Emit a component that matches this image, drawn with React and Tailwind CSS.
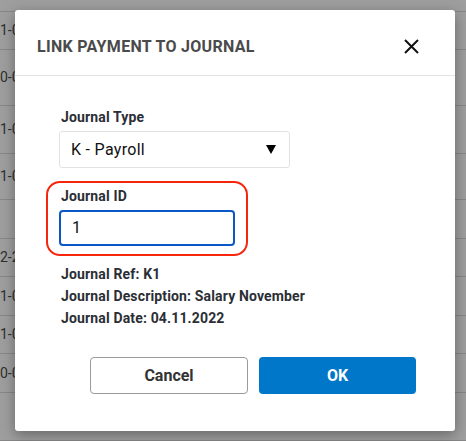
import React from 'react';

const rows = [
  { h: 'h-[12px]', text: '' },
  { h: 'h-[38px]', text: '1-01-2022' },
  { h: 'h-[56px]', text: '0-02-2022' },
  { h: 'h-[48px]', text: '1-03-2022' },
  { h: 'h-[46px]', text: '1-04-2022' },
  { h: 'h-[39px]', text: '' },
  { h: 'h-[38px]', text: '2-22-2022' },
  { h: 'h-[39px]', text: '1-05-2022' },
  { h: 'h-[38px]', text: '1-06-2022' },
  { h: 'h-[39px]', text: '0-07-2022' },
  { h: 'h-[48px]', text: '' },
];

const Field = ({ label, children }) => (
  <div className="flex flex-col">
    <label className="pl-[2px] text-[14px] leading-[20px] font-bold text-[#2b2e35] tracking-[0.15px]">{label}</label>
    <div className="mt-1">{children}</div>
  </div>
);

const LinkPaymentModal = () => {
  return (
    <div className="w-[440px] h-[421px] bg-white rounded-[3px] shadow-[0_4px_14px_rgba(0,0,0,0.35)] flex flex-col">
      <div className="flex items-start justify-between pl-[22px] pr-[36px] pt-[25px] h-[66px] border-b border-[#e3e3e3]">
        <h2 className="text-[16px] leading-[24px] font-bold text-[#4a4a4a] tracking-[0.3px]">LINK PAYMENT TO JOURNAL</h2>
        <button className="mt-[4px] w-[15px] h-[15px] flex items-center justify-center" aria-label="Close">
          <svg width="15" height="15" viewBox="0 0 15 15">
            <path d="M1 1 L14 14 M14 1 L1 14" stroke="#111" strokeWidth="2" />
          </svg>
        </button>
      </div>

      <div className="pl-[44px] pt-[31px] flex flex-col">
        <Field label="Journal Type">
          <div className="w-[231px] h-[37px] border border-[#e2e2e2] rounded-[3px] flex items-center justify-between pl-[11px] pr-[13px]">
            <span className="text-[16px] text-[#111] tracking-[0.3px]">K - Payroll</span>
            <svg width="10" height="9" viewBox="0 0 10 9">
              <path d="M0 0 H10 L5 9 Z" fill="#000" />
            </svg>
          </div>
        </Field>

        <div className="mt-[13px] -ml-[13px] w-[202px] border-2 border-[#f5260b] rounded-[14px] pl-[11px] pt-[3px] pb-[8px]">
          <Field label="Journal ID">
            <div className="w-[176px] h-[36px] border-2 border-[#0b57c5] rounded-[4px] flex items-center pl-[11px]">
              <span className="text-[16px] text-[#111]">1</span>
            </div>
          </Field>
        </div>

        <div className="mt-[7px] pl-[2px] text-[14px] leading-[22px] font-bold text-[#2b2e35] tracking-[0.15px]">
          <p>Journal Ref: K1</p>
          <p>Journal Description: Salary November</p>
          <p>Journal Date: 04.11.2022</p>
        </div>
      </div>

      <div className="mt-[28px] flex justify-end gap-[11px] pr-[39px]">
        <button className="w-[158px] h-[37px] border border-[#9a9a9a] rounded-[4px] text-[16px] font-bold text-[#333]">Cancel</button>
        <button className="w-[157px] h-[37px] bg-[#0077c8] rounded-[4px] text-[16px] font-bold text-white">OK</button>
      </div>
    </div>
  );
};

export default function App() {
  return (
    <div className="relative w-[466px] h-[441px] overflow-hidden bg-[#9e9e9e] font-['Roboto',sans-serif]">
      <div className="flex flex-col">
        {rows.map((r, i) => (
          <div key={i} className={`${r.h} border-b border-[#878787] flex items-center text-[14px] text-[#2e2e2e] whitespace-nowrap`}>
            {r.text}
          </div>
        ))}
      </div>
      <div className="absolute left-[15px] top-[10px]">
        <LinkPaymentModal />
      </div>
    </div>
  );
}
